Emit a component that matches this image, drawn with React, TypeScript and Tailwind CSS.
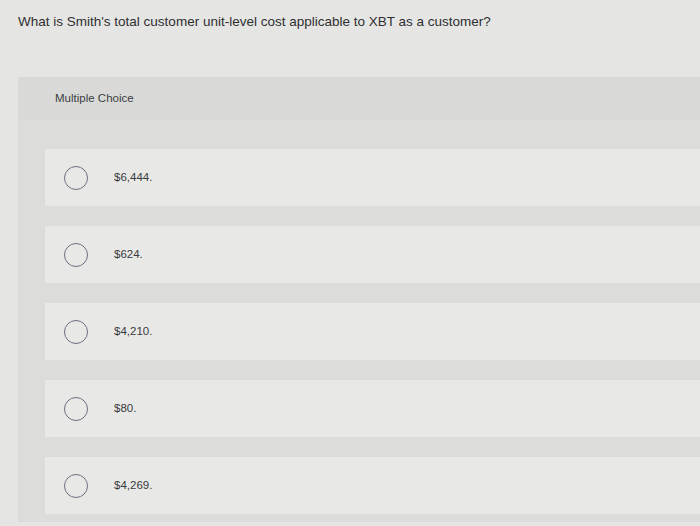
const options = ["$6,444.", "$624.", "$4,210.", "$80.", "$4,269."];

function Radio() {
  return (
    <span className="block h-[24px] w-[24px] shrink-0 rounded-full border-[1.5px] border-[#6c6f80]" />
  );
}

export default function App() {
  return (
    <div
      className="h-[526px] w-[700px] overflow-hidden bg-[#e5e6e4] text-[#3a3b3d]"
      style={{ fontFamily: '"Liberation Sans", Arial, sans-serif' }}
    >
      <p className="pl-[18px] pt-[14px] text-[13.5px] leading-[16px] text-[#2e2f31]">
        What is Smith's total customer unit-level cost applicable to XBT as a customer?
      </p>

      <div className="ml-[18px] mt-[47px] bg-[#dcdddb]">
        <div className="flex h-[43px] items-center bg-[#d9dad8] pl-[37px] text-[11.5px] text-[#3c3d40]">
          Multiple Choice
        </div>
        <div className="flex flex-col gap-[20px] pb-[8px] pl-[27px] pt-[29px]">
          {options.map((o) => (
            <div key={o} className="flex h-[57px] items-center bg-[#e8e9e7] pl-[19px]">
              <Radio />
              <span className="ml-[26px] text-[11.5px] text-[#38393c]">{o}</span>
            </div>
          ))}
        </div>
      </div>
    </div>
  );
}
